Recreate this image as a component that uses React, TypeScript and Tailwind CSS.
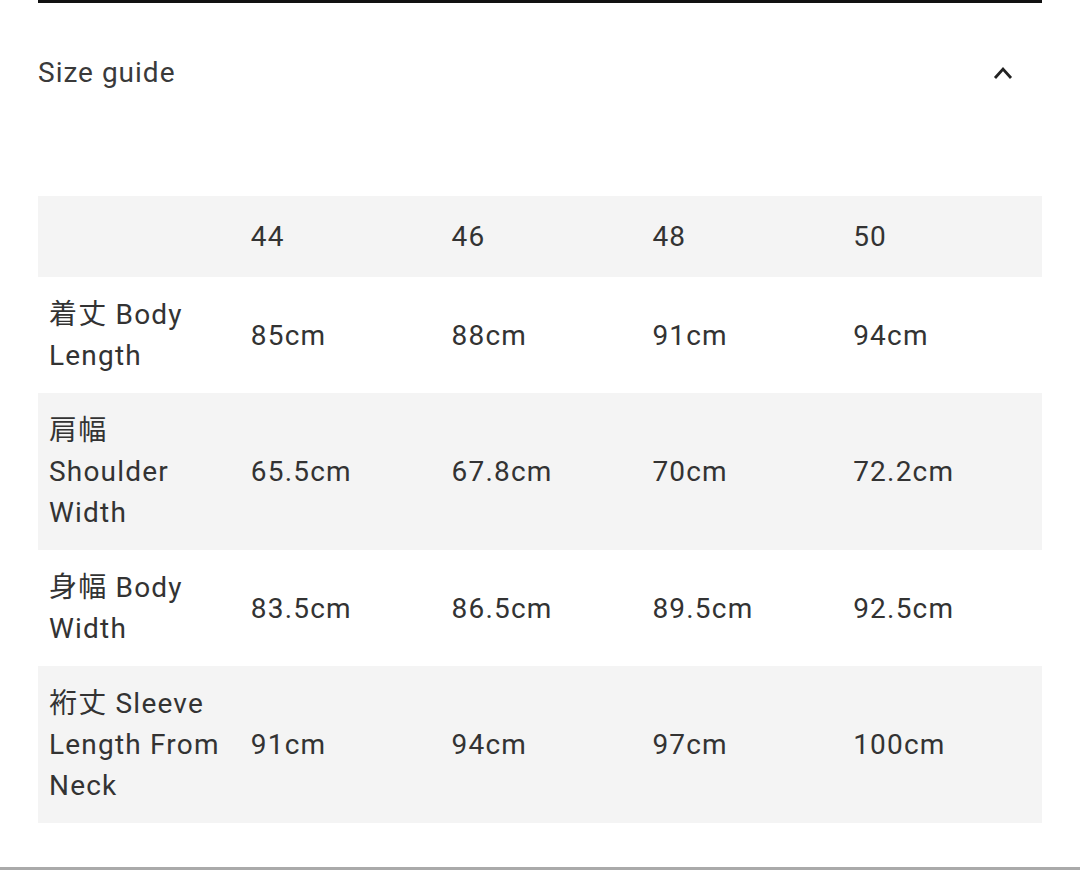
const sizes = ["44", "46", "48", "50"];

const rows = [
  { label: ["着丈 Body", "Length"], values: ["85cm", "88cm", "91cm", "94cm"], shaded: false },
  { label: ["肩幅", "Shoulder", "Width"], values: ["65.5cm", "67.8cm", "70cm", "72.2cm"], shaded: true },
  { label: ["身幅 Body", "Width"], values: ["83.5cm", "86.5cm", "89.5cm", "92.5cm"], shaded: false },
  { label: ["裄丈 Sleeve", "Length From", "Neck"], values: ["91cm", "94cm", "97cm", "100cm"], shaded: true },
];

export default function App() {
  return (
    <div
      className="w-[1080px] h-[870px] bg-white text-[#333] flex flex-col overflow-hidden"
      style={{ fontFamily: 'Roboto, "Noto Sans CJK JP", sans-serif' }}
    >
      <div className="mx-[38px] h-[3px] bg-[#111]" />

      <div className="mx-[38px] mt-[52px] flex items-center justify-between">
        <h2 className="text-[28px] leading-[36px] tracking-[1px] text-[#3a3a3a]">Size guide</h2>
        <svg width="22" height="16" viewBox="0 0 22 16" className="mr-[28px]">
          <path d="M3 13 L11 4 L19 13" fill="none" stroke="#222" strokeWidth="2.8" />
        </svg>
      </div>

      <div className="mx-[38px] mt-[105px] text-[28px] leading-[41px] tracking-[1.2px]">
        <div className="grid grid-cols-5 bg-[#f4f4f4] h-[81px] items-center">
          <div />
          {sizes.map((s) => (
            <div key={s} className="pl-[12px]">
              {s}
            </div>
          ))}
        </div>

        {rows.map((row, i) => (
          <div
            key={i}
            className={`grid grid-cols-5 items-center py-[17px] ${row.shaded ? "bg-[#f4f4f4]" : "bg-white"}`}
          >
            <div className="pl-[11px] whitespace-nowrap">
              {row.label.map((l, j) => (
                <div key={j}>{l}</div>
              ))}
            </div>
            {row.values.map((v, j) => (
              <div key={j} className="pl-[12px]">
                {v}
              </div>
            ))}
          </div>
        ))}
      </div>

      <div className="mt-auto h-[3px] bg-[#aaa]" />
    </div>
  );
}
